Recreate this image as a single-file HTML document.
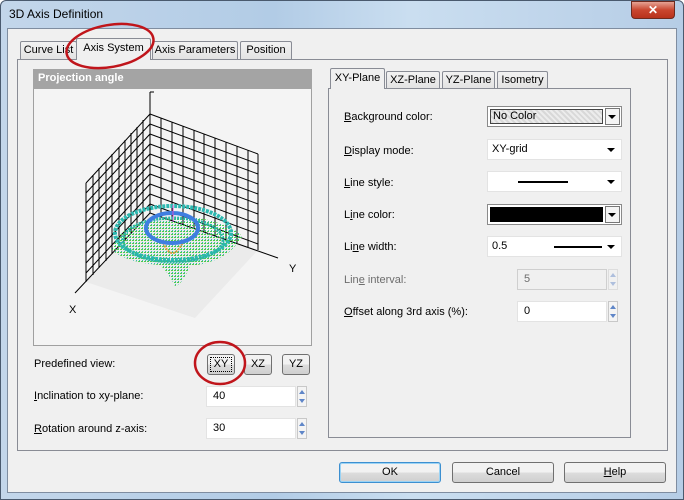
<!DOCTYPE html>
<html><head><meta charset="utf-8"><style>
*{box-sizing:border-box;margin:0;padding:0}
body{width:684px;height:500px;overflow:hidden;font-family:"Liberation Sans",sans-serif;font-size:11px;color:#000;background:#fff;position:relative}
.a{position:absolute}
.lbl{position:absolute;font-size:11px;white-space:nowrap}
.tab{position:absolute;border:1px solid #898c95;border-bottom:none;background:linear-gradient(#f2f2f2,#e3e3e3);font-size:11px;text-align:center;line-height:16px;border-radius:2px 2px 0 0}
.combo{position:absolute;background:#fff;border:1px solid #e3e3e3;height:21px}
.arr{position:absolute;right:6px;top:8px;width:0;height:0;border-left:4px solid transparent;border-right:4px solid transparent;border-top:4px solid #000}
.btn{position:absolute;border:1px solid #707070;border-radius:3px;background:linear-gradient(#f2f2f2 50%,#dddddd 50%,#cfcfcf);text-align:center;font-size:11px;line-height:19px}
.edit{position:absolute;background:#fff;border:1px solid #e3e3e3;height:21px;padding-left:6px;line-height:19px}
.spin{position:absolute;width:10px;height:21px;border:1px solid #c8c8c8;background:#f4f4f4}
.spin:before{content:"";position:absolute;left:1px;top:3px;border-left:3px solid transparent;border-right:3px solid transparent;border-bottom:4px solid #5f86c8}
.spin:after{content:"";position:absolute;left:1px;top:12px;border-left:3px solid transparent;border-right:3px solid transparent;border-top:4px solid #5f86c8}
u{text-decoration:underline}
</style></head><body>
<div class="a" style="left:0;top:0;width:684px;height:500px;background:linear-gradient(90deg,#c3d6ea,#b2cce6 40%,#cadef0 60%,#b6cde6);border:1px solid #4a5a6e;border-radius:6px 6px 0 0"></div>
<div class="lbl" style="left:9px;top:7px;font-size:12px">3D Axis Definition</div>
<div class="a" style="left:631px;top:1px;width:44px;height:18px;background:linear-gradient(#e5a394,#c9462f 50%,#b8321c);border:1px solid #6e2a1e;border-radius:0 0 4px 4px;color:#fff;font-weight:bold;text-align:center;font-size:12px;line-height:16px">✕</div>
<div class="a" style="left:7px;top:28px;width:670px;height:465px;background:#f0f0f0;border:1px solid #7f8da0"></div>
<div class="a" style="left:17px;top:59px;width:651px;height:392px;border:1px solid #898c95;background:#f0f0f0"></div>
<div class="tab" style="left:20px;top:41px;width:57px;height:18px">Curve List</div>
<div class="tab" style="left:152px;top:41px;width:86px;height:18px">Axis Parameters</div>
<div class="tab" style="left:240px;top:41px;width:52px;height:18px">Position</div>
<div class="tab" style="left:76px;top:38px;width:75px;height:22px;background:#f0f0f0;line-height:19px">Axis System</div>
<div class="a" style="left:33px;top:69px;width:279px;height:277px;border:1px solid #a0a0a0;background:#f4f4f4"></div>
<div class="a" style="left:33px;top:69px;width:279px;height:20px;background:#a4a4a4;color:#fff;font-weight:bold;padding:3px 5px;font-size:11px">Projection angle</div>
<svg class="a" style="left:34px;top:89px" width="277" height="256" viewBox="34 89 277 256">
<defs><pattern id="dots" width="3" height="3" patternUnits="userSpaceOnUse"><rect width="2" height="1" fill="#3cc83a"/><rect x="1" y="2" width="1" height="1" fill="#22b4a8"/></pattern></defs>
<polygon points="86,282 150,213 258,250 195,318" fill="#ebebeb"/>
<g stroke="#000" stroke-width="1" fill="none">
<line x1="150" y1="92" x2="150" y2="213"/><line x1="150" y1="92" x2="154" y2="92"/>
<line x1="150" y1="213" x2="278" y2="258"/><line x1="150" y1="213" x2="75" y2="293"/>
<path d="M161,118V217 M172,122V221 M183,126V225 M194,130V229 M204,134V232 M215,138V236 M226,142V240 M237,146V243 M248,150V247 M258,154V250"/>
<path d="M150,114L258,154 M150,124L258,164 M150,134L258,174 M150,144L258,184 M150,154L258,194 M150,164L258,204 M150,174L258,214 M150,184L258,224 M150,194L258,234 M150,204L258,244"/>
<path d="M86,183V282 M93,175V275 M99,168V268 M106,161V261 M112,154V254 M119,147V247 M125,140V241 M131,133V234 M137,127V227 M143,120V220"/>
<path d="M86,183L150,114 M86,193L150,124 M86,203L150,134 M86,213L150,144 M86,223L150,154 M86,233L150,164 M86,243L150,174 M86,253L150,184 M86,263L150,194 M86,273L150,204"/>
</g>
<path d="M112,250 Q118,225 155,220 Q200,210 238,232 Q245,238 238,242 Q225,262 190,266 Q182,285 175,286 Q168,272 160,265 Q125,262 112,250Z" fill="url(#dots)" opacity=".9"/>
<ellipse cx="173" cy="233" rx="58" ry="27" fill="none" stroke="#2cb8b0" stroke-width="4" stroke-dasharray="3 1"/>
<ellipse cx="173" cy="240" rx="50" ry="22" fill="none" stroke="#2ab5a5" stroke-width="3" stroke-dasharray="2 1"/>
<path d="M162,240 Q172,266 184,240" fill="none" stroke="#d69a3a" stroke-width="2" stroke-dasharray="2 1"/>
<ellipse cx="172" cy="228" rx="26" ry="15" fill="none" stroke="#3f7ee0" stroke-width="4"/>
<line x1="173" y1="205" x2="173" y2="222" stroke="#d050d0" stroke-width="1"/>
<text x="69" y="313" font-size="11" font-family="Liberation Sans">X</text>
<text x="289" y="272" font-size="11" font-family="Liberation Sans">Y</text>
</svg>
<div class="lbl" style="left:34px;top:358px">Predefined view:</div>
<div class="btn" style="left:207px;top:354px;width:28px;height:21px;outline:1px dotted #000;outline-offset:-4px">XY</div>
<div class="btn" style="left:244px;top:354px;width:28px;height:21px">XZ</div>
<div class="btn" style="left:282px;top:354px;width:28px;height:21px">YZ</div>
<div class="lbl" style="left:34px;top:390px"><u>I</u>nclination to xy-plane:</div>
<div class="edit" style="left:206px;top:386px;width:90px">40</div><div class="spin" style="left:297px;top:386px"></div>
<div class="lbl" style="left:34px;top:423px"><u>R</u>otation around z-axis:</div>
<div class="edit" style="left:206px;top:418px;width:90px">30</div><div class="spin" style="left:297px;top:418px"></div>
<div class="a" style="left:328px;top:88px;width:303px;height:350px;border:1px solid #898c95;background:#f0f0f0"></div>
<div class="tab" style="left:386px;top:71px;width:54px;height:17px">XZ-Plane</div>
<div class="tab" style="left:442px;top:71px;width:53px;height:17px">YZ-Plane</div>
<div class="tab" style="left:497px;top:71px;width:51px;height:17px">Isometry</div>
<div class="tab" style="left:330px;top:68px;width:55px;height:21px;background:#f0f0f0;line-height:19px">XY-Plane</div>
<div class="lbl" style="left:344px;top:111px"><u>B</u>ackground color:</div>
<div class="a" style="left:487px;top:106px;width:135px;height:21px;border:1px solid #8a8a8a;background:#fff"></div>
<div class="a" style="left:490px;top:109px;width:113px;height:15px;border:1px solid #444;background:repeating-linear-gradient(45deg,#d8d8d8 0 2px,#ececec 2px 4px);padding-left:2px;line-height:13px">No Color</div>
<div class="a" style="left:605px;top:108px;width:15px;height:17px;border:1px solid #777;background:#f4f4f4"><div class="arr" style="right:3px;top:6px"></div></div>
<div class="lbl" style="left:344px;top:145px"><u>D</u>isplay mode:</div>
<div class="combo" style="left:487px;top:139px;width:135px;padding:3px 4px">XY-grid<div class="arr"></div></div>
<div class="lbl" style="left:344px;top:177px"><u>L</u>ine style:</div>
<div class="combo" style="left:487px;top:171px;width:135px"><div class="a" style="left:30px;top:9px;width:50px;height:2px;background:#000"></div><div class="arr"></div></div>
<div class="lbl" style="left:344px;top:209px">L<u>i</u>ne color:</div>
<div class="a" style="left:487px;top:204px;width:135px;height:21px;border:1px solid #8a8a8a;background:#fff"></div>
<div class="a" style="left:490px;top:207px;width:113px;height:15px;background:#000"></div>
<div class="a" style="left:605px;top:206px;width:15px;height:17px;border:1px solid #777;background:#f4f4f4"><div class="arr" style="right:3px;top:6px"></div></div>
<div class="lbl" style="left:344px;top:241px">Li<u>n</u>e width:</div>
<div class="combo" style="left:487px;top:236px;width:135px;padding:3px 4px">0.5<div class="a" style="left:66px;top:9px;width:48px;height:2px;background:#000"></div><div class="arr"></div></div>
<div class="lbl" style="left:344px;top:274px;color:#6d6d6d">Lin<u>e</u> interval:</div>
<div class="edit" style="left:517px;top:269px;width:90px;background:#f0f0f0;border-color:#cfcfcf;color:#6d6d6d">5</div><div class="spin" style="left:608px;top:269px;opacity:.45"></div>
<div class="lbl" style="left:344px;top:306px"><u>O</u>ffset along 3rd axis (%):</div>
<div class="edit" style="left:517px;top:301px;width:90px">0</div><div class="spin" style="left:608px;top:301px"></div>
<div class="btn" style="left:339px;top:462px;width:102px;height:21px;border-color:#3c8fd0;box-shadow:inset 0 0 0 1px #9ad3f5">OK</div>
<div class="btn" style="left:452px;top:462px;width:102px;height:21px">Cancel</div>
<div class="btn" style="left:564px;top:462px;width:102px;height:21px"><u>H</u>elp</div>
<svg class="a" style="left:0;top:0" width="684" height="500">
<ellipse cx="110" cy="46" rx="44" ry="21" transform="rotate(-10 110 46)" fill="none" stroke="#c0151b" stroke-width="2.5"/>
<ellipse cx="220" cy="363" rx="25" ry="21" fill="none" stroke="#c0151b" stroke-width="2.5"/>
</svg>
</body></html>
